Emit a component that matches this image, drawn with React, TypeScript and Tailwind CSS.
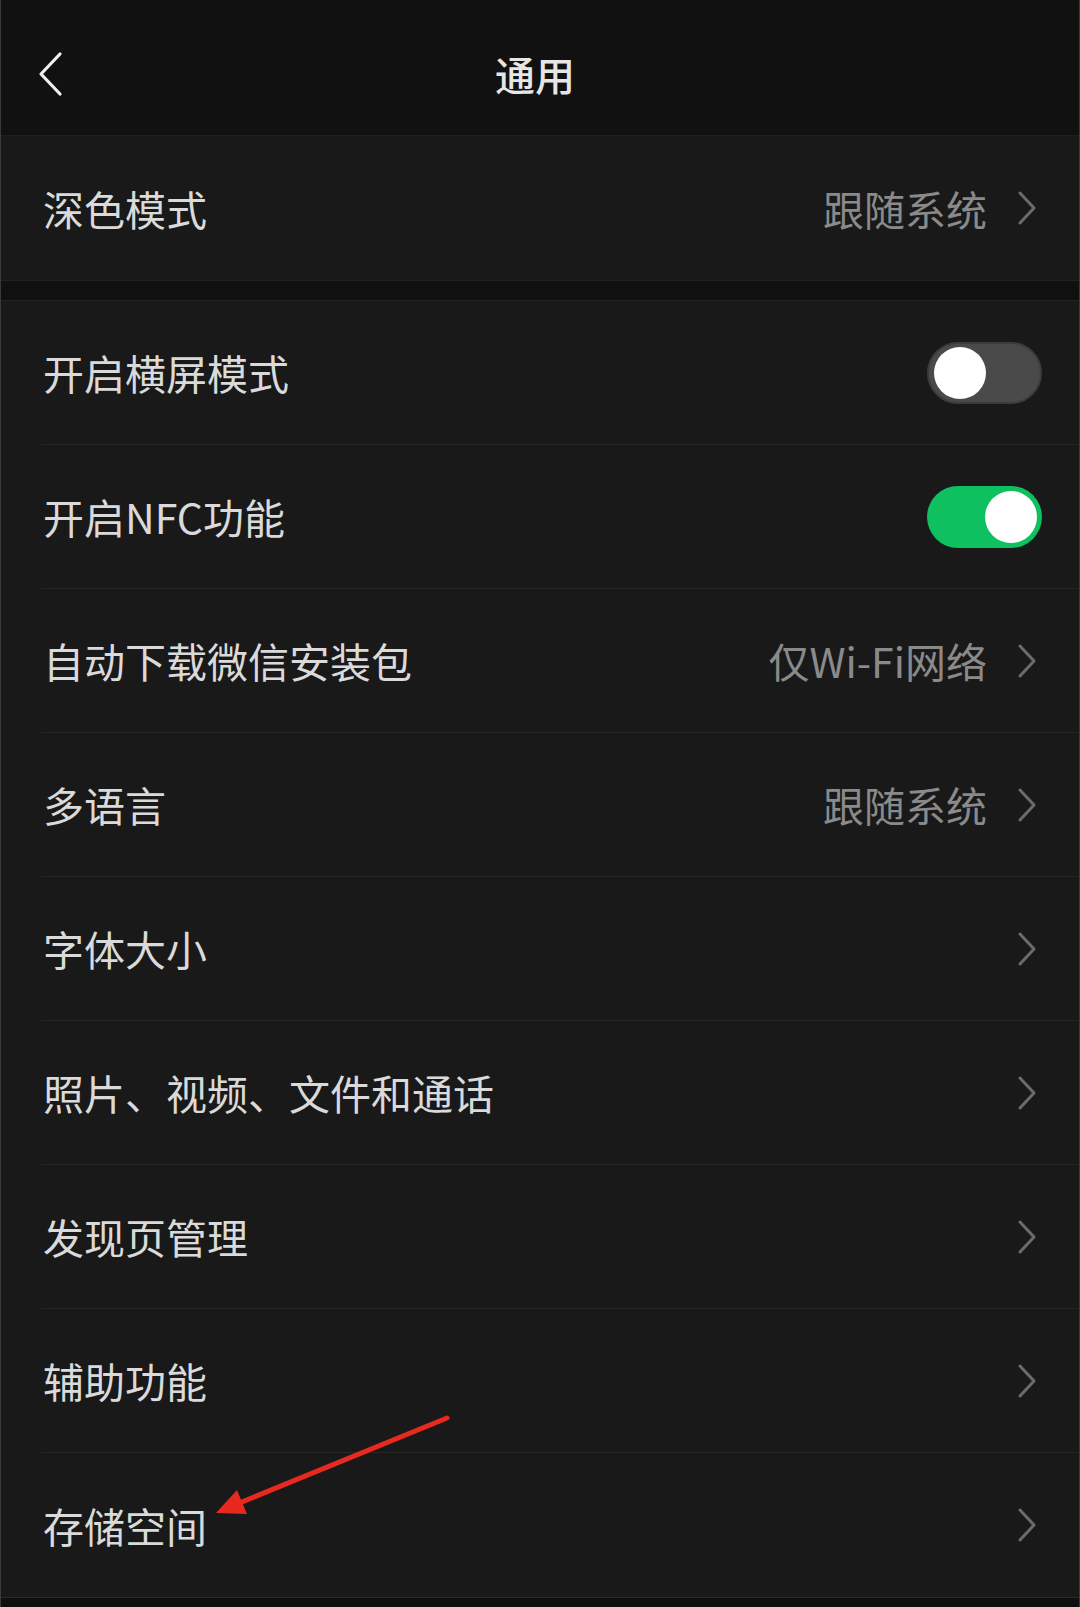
import React from 'react';

type Row = {
  label: string;
  value?: string;
  toggle?: boolean;
};

const rows: Row[] = [
  { label: '开启横屏模式', toggle: false },
  { label: '开启NFC功能', toggle: true },
  { label: '自动下载微信安装包', value: '仅Wi-Fi网络' },
  { label: '多语言', value: '跟随系统' },
  { label: '字体大小' },
  { label: '照片、视频、文件和通话' },
  { label: '发现页管理' },
  { label: '辅助功能' },
  { label: '存储空间' },
];

const Chevron = () => (
  <svg width="20" height="34" viewBox="0 0 20 34" className="shrink-0">
    <polyline points="3,2 17,17 3,32" fill="none" stroke="#6b6b6b" strokeWidth="3" strokeLinecap="round" strokeLinejoin="round" />
  </svg>
);

const Toggle: React.FC<{ on: boolean }> = ({ on }) => (
  <div
    className={`w-[115px] h-[62px] rounded-full flex items-center px-[5px] ${
      on ? 'bg-[#0ec05f] justify-end' : 'bg-[#4a4a4a] border-2 border-[#3c3c3c] justify-start'
    }`}
  >
    <div className="w-[52px] h-[52px] rounded-full bg-white" />
  </div>
);

const SettingRow: React.FC<{ row: Row; last?: boolean }> = ({ row, last }) => (
  <div className="pl-[40px] bg-[#191919] h-[144px]">
    <div className={`h-full flex items-center pl-[2px] pr-[42px] ${last ? '' : 'border-b border-[#262626]'}`}>
      <span className="text-[41px] leading-none text-[#dadada]">{row.label}</span>
      <div className="ml-auto flex items-center">
        {row.toggle !== undefined ? (
          <div className="-mr-[5px]">
            <Toggle on={row.toggle} />
          </div>
        ) : (
          <>
            {row.value && <span className="text-[41px] leading-none text-[#8a8a8a] mr-[30px]">{row.value}</span>}
            <Chevron />
          </>
        )}
      </div>
    </div>
  </div>
);

export default function App() {
  return (
    <div
      className="relative w-[1080px] h-[1607px] bg-[#0f0f0f] border-x border-[#3a3a3a] overflow-hidden"
      style={{ fontFamily: '"Noto Sans CJK SC", "Noto Sans", sans-serif' }}
    >
      {/* status bar remnant */}
      <div className="absolute top-0 left-0 right-0 h-px bg-[#3a3a3a]" />
      <div className="absolute top-0 left-[182px] w-[23px] h-[3px] rounded-b bg-[#3fb7e6]" />
      <div className="absolute top-0 left-[228px] w-[24px] h-[3px] rounded-b bg-[#3fb7e6]" />
      <div className="absolute top-0 left-[841px] w-[3px] h-[3px] bg-white" />

      {/* header */}
      <div className="h-[136px] pt-[12px] bg-[#111111] border-b border-[#1f1f1f] flex items-center relative">
        <svg width="26" height="46" viewBox="0 0 26 46" className="ml-[37px]">
          <polyline points="22,3 3,23 22,43" fill="none" stroke="#f0f0f0" strokeWidth="3.2" strokeLinecap="round" strokeLinejoin="round" />
        </svg>
        <div className="absolute inset-0 pt-[12px] flex items-center justify-center">
          <span className="text-[40px] leading-none font-medium text-[#e6e6e6] -ml-[10px]">通用</span>
        </div>
      </div>

      {/* dark mode */}
      <div className="h-[145px] bg-[#191919] flex items-center pl-[42px] pr-[42px] border-b border-[#222222]">
        <span className="text-[41px] leading-none text-[#dadada]">深色模式</span>
        <span className="ml-auto text-[41px] leading-none text-[#8a8a8a] mr-[30px]">跟随系统</span>
        <Chevron />
      </div>

      <div className="h-[20px] bg-[#101010] border-b border-[#222222]" />

      <div>
        {rows.map((r, i) => (
          <SettingRow key={r.label} row={r} last={i === rows.length - 1} />
        ))}
      </div>
      <div className="h-px bg-[#2a2a2a]" />

      {/* annotation arrow */}
      <svg className="absolute left-0 top-0 pointer-events-none" width="1080" height="1607">
        <line x1="446" y1="1418" x2="236" y2="1504" stroke="#e8291f" strokeWidth="5" strokeLinecap="round" />
        <polygon points="215,1513 236,1490 246,1514" fill="#e8291f" />
      </svg>
    </div>
  );
}
